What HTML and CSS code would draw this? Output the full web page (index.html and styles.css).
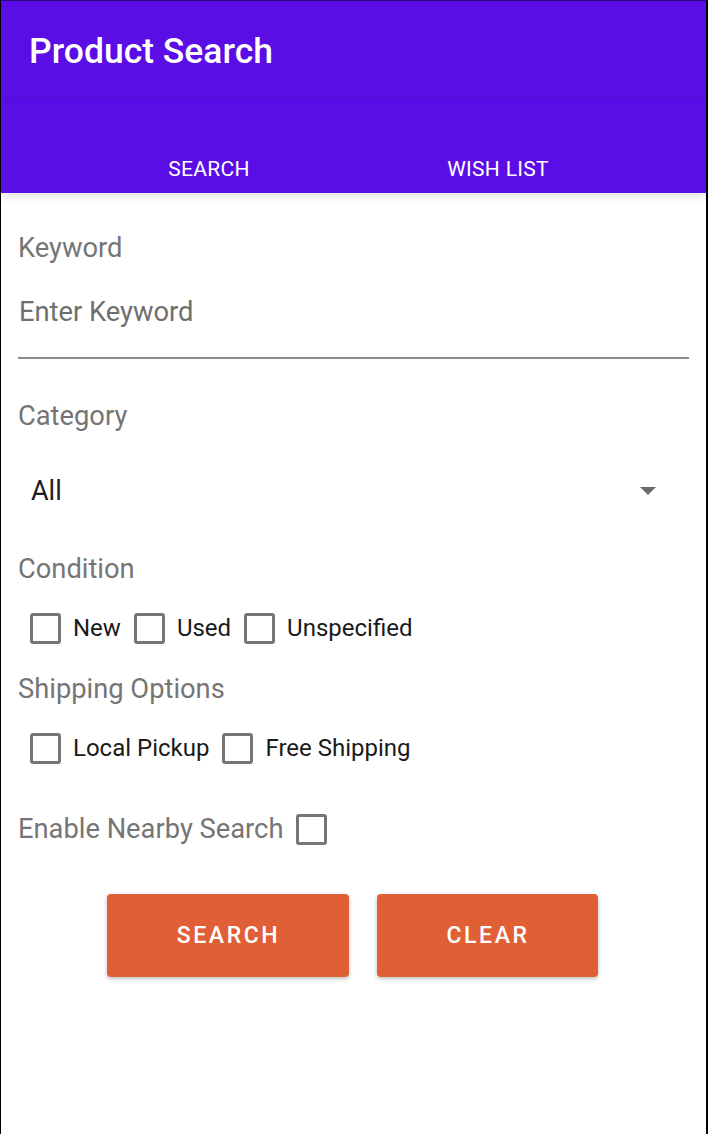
FILE: index.html
```html
<!DOCTYPE html>
<html>
<head>
<meta charset="utf-8">
<link rel="stylesheet" href="styles.css">
</head>
<body>
<div class="app">
  <header class="appbar">
    <div class="toolbar"><h1 class="title">Product Search</h1></div>
    <nav class="tabs">
      <div class="tab">SEARCH</div>
      <div class="tab">WISH LIST</div>
    </nav>
  </header>
  <main class="form">
    <div class="label label-keyword">Keyword</div>
    <div class="input">Enter Keyword</div>
    <div class="label label-category">Category</div>
    <div class="select">
      <span>All</span>
      <svg class="caret" width="16" height="8" viewBox="0 0 16 8"><path d="M0 0H16L8 8Z" fill="#6b6b6b"/></svg>
    </div>
    <div class="label label-condition">Condition</div>
    <div class="checks checks-condition">
      <label class="check"><span class="box"></span>New</label>
      <label class="check"><span class="box"></span>Used</label>
      <label class="check"><span class="box"></span>Unspecified</label>
    </div>
    <div class="label label-shipping">Shipping Options</div>
    <div class="checks checks-shipping">
      <label class="check"><span class="box"></span>Local Pickup</label>
      <label class="check"><span class="box"></span>Free Shipping</label>
    </div>
    <div class="nearby">
      <span class="label">Enable Nearby Search</span>
      <span class="box"></span>
    </div>
    <div class="buttons">
      <button class="btn btn-search">SEARCH</button>
      <button class="btn btn-clear">CLEAR</button>
    </div>
  </main>
</div>
</body>
</html>
```
FILE: styles.css
```css
html, body {
  margin: 0;
  padding: 0;
  background: #ffffff;
}
body {
  font-family: Roboto, "Noto Sans", sans-serif;
}
.app {
  width: 708px;
  height: 1134px;
  box-sizing: border-box;
  border-left: 1px solid #000;
  border-right: 2px solid #000;
  border-top: 1px solid #2b0a80;
  overflow: hidden;
  background: #fff;
}
.appbar {
  background: #5a0ee5;
  box-shadow: 0 3px 10px rgba(0,0,0,0.12);
  position: relative;
}
.toolbar {
  height: 96px;
  box-shadow: 0 1px 2px rgba(0,0,0,0.10);
  display: flex;
  align-items: center;
  padding-left: 28px;
}
.title {
  margin: 3px 0 0 0;
  color: #fff;
  font-size: 35.5px;
  font-weight: 500;
}
.tabs {
  height: 96px;
  display: flex;
  justify-content: center;
  align-items: flex-end;
}
.tab {
  width: 289px;
  text-align: center;
  color: #fff;
  font-size: 21px;
  letter-spacing: 0.3px;
  line-height: 24px;
  padding-bottom: 12px;
}
.form {
  padding: 39px 17px 0 17px;
}
.label {
  color: #757575;
  font-size: 27.3px;
  line-height: 32px;
}
.input {
  color: #6f6f6f;
  font-size: 27.3px;
  line-height: 32px;
  padding: 32px 0 29px 1px;
  border-bottom: 2px solid #8a8a8a;
}
.label-category {
  margin-top: 41px;
}
.select {
  display: flex;
  align-items: center;
  justify-content: space-between;
  height: 32px;
  margin-top: 43px;
  padding: 0 33px 0 13px;
  color: #1d1d1d;
  font-size: 27px;
}
.caret {
  margin-top: -1px;
}
.label-condition {
  margin-top: 46px;
}
.checks {
  display: flex;
  align-items: center;
  gap: 13px;
  margin-top: 27px;
  padding-left: 12px;
  height: 32px;
}
.check {
  display: flex;
  align-items: center;
  gap: 12px;
  font-size: 24px;
  color: #1a1a1a;
}
.box {
  display: inline-block;
  width: 25px;
  height: 25px;
  border: 3px solid #767676;
  border-radius: 3px;
}
.label-shipping {
  margin-top: 29px;
}
.nearby {
  display: flex;
  align-items: center;
  gap: 13px;
  height: 32px;
  margin-top: 49px;
}
.buttons {
  display: flex;
  justify-content: center;
  gap: 28px;
  margin-top: 49px;
  padding-right: 3px;
}
.btn {
  background: #e05f35;
  color: #fff;
  border: none;
  border-radius: 4px;
  height: 83px;
  font-family: Roboto, sans-serif;
  font-size: 23px;
  font-weight: 500;
  letter-spacing: 2.6px;
  padding: 0 0 0 2px;
  box-shadow: 0 2px 4px rgba(0,0,0,0.25);
}
.btn-search { width: 242px; }
.btn-clear { width: 221px; }
```
